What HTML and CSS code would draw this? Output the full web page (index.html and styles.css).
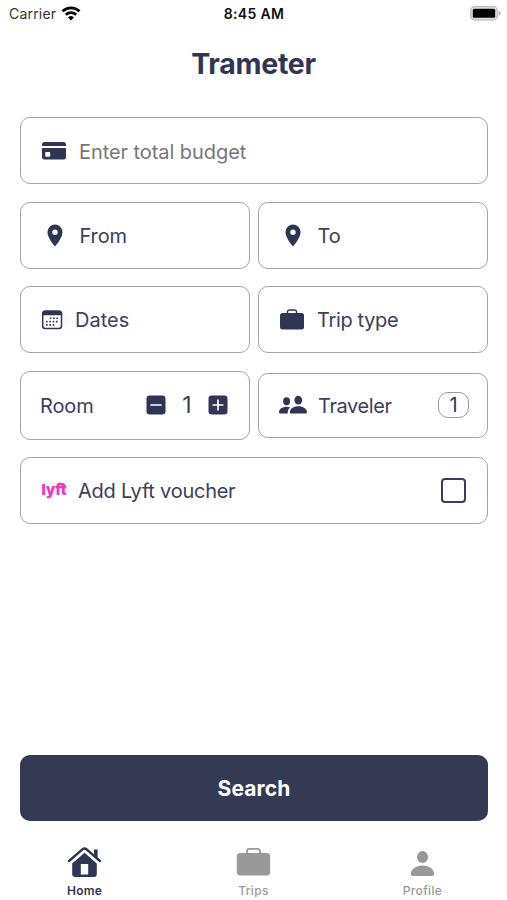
FILE: index.html
```html
<!DOCTYPE html>
<html lang="en">
<head>
<meta charset="utf-8">
<title>Trameter</title>
<link rel="stylesheet" href="styles.css">
</head>
<body>
<div class="app">
  <header class="status">
    <div class="carrier"><span>Carrier</span>
      <svg width="20" height="15" viewBox="0 0 20 15" fill="none" stroke="#000" stroke-width="2.7"><path d="M1.500 5.300a12.200 12.200 0 0 1 17 0M4.800 8.800a7.500 7.500 0 0 1 10.400 0"/><path d="M10 14.500 7 11.400a4.300 4.300 0 0 1 6 0z" fill="#000" stroke="none"/></svg>
    </div>
    <time class="clock">8:45 AM</time>
    <svg class="battery" width="31" height="15" viewBox="0 0 31 15"><rect x=".7" y=".7" width="26.600" height="13.200" rx="4" fill="#e4e4e4" stroke="#b8b8b8" stroke-width="1.200"/><rect x="2.800" y="2.800" width="22.400" height="9" rx="1.500"/><path d="M28.600 4.800Q30.700 5.700 30.700 7.300T28.600 9.800z" fill="#b0b0b0"/></svg>
  </header>
  <h1 class="title">Trameter</h1>
  <main class="form">
    <div class="field">
      <svg class="icon" width="26" height="20" viewBox="0 0 26 20"><path d="M1 5V3.500Q1 1 3.500 1h19Q25 1 25 3.500V5z"/><path fill-rule="evenodd" d="M1 7h24v9q0 2.500-2.500 2.500h-19Q1 18.500 1 16zm4.200 4q-1 0-1 1v2.700q0 1 1 1h3q1 0 1-1V12q0-1-1-1z"/></svg>
      <span class="label budget">Enter total budget</span>
    </div>
    <div class="row">
      <div class="field">
        <svg class="icon pin" width="16" height="23" viewBox="0 0 16 23"><path fill-rule="evenodd" d="M8 .5A7.500 7.500 0 0 0 .5 8C.5 13 5 19 8 22.500c3-3.500 7.500-9.500 7.500-14.500A7.500 7.500 0 0 0 8 .5zm0 5a2.700 2.700 0 1 1 0 5.400 2.700 2.700 0 0 1 0-5.400z"/></svg>
        <span class="label from">From</span>
      </div>
      <div class="field">
        <svg class="icon pin" width="16" height="23" viewBox="0 0 16 23"><path fill-rule="evenodd" d="M8 .5A7.500 7.500 0 0 0 .5 8C.5 13 5 19 8 22.500c3-3.500 7.500-9.500 7.500-14.500A7.500 7.500 0 0 0 8 .5zm0 5a2.700 2.700 0 1 1 0 5.400 2.700 2.700 0 0 1 0-5.400z"/></svg>
        <span class="label from">To</span>
      </div>
    </div>
    <div class="row">
      <div class="field">
        <svg class="icon calendar" width="22" height="20" viewBox="0 0 22 20"><rect x="1.700" y="1.200" width="18.800" height="17.200" rx="2.500" fill="none" stroke="#2f3553" stroke-width="1.500"/><path d="M1 5.300V4q0-3.500 3.500-3.500h13Q21.200.5 21.200 4v1.300z"/><path d="M8.800 8.300h9M5 11.600h12.800M5 14.900h9.500" fill="none" stroke="#2f3553" stroke-width="1.600" stroke-dasharray="1.600 1.700"/></svg>
        <span class="label">Dates</span>
      </div>
      <div class="field">
        <svg class="icon" width="26" height="21" viewBox="0 0 26 21"><rect x="1" y="4" width="24" height="16.500" rx="2.500"/><path d="M8.500 4.500V3Q8.500 1 10.500 1h5q2 0 2 2v1.500" fill="none" stroke="#2f3553" stroke-width="1.400"/></svg>
        <span class="label trip">Trip type</span>
      </div>
    </div>
    <div class="row">
      <div class="field room">
        <span class="label">Room</span>
        <div class="stepper">
          <svg width="20" height="20" viewBox="0 0 20 20"><rect x=".5" y=".5" width="19" height="19" rx="3.300" fill="#2f3553"/><path d="M5 10h10" stroke="#fff" stroke-width="1.700" stroke-linecap="round"/></svg>
          <span class="count">1</span>
          <svg width="20" height="20" viewBox="0 0 20 20"><rect x=".5" y=".5" width="19" height="19" rx="3.300" fill="#2f3553"/><path d="M5.200 10h9.600M10 5.200v9.600" stroke="#fff" stroke-width="1.700" stroke-linecap="round"/></svg>
        </div>
      </div>
      <div class="field traveler">
        <svg class="icon" width="29" height="20" viewBox="0 0 29 20"><ellipse cx="7.600" cy="6.300" rx="3.500" ry="4"/><ellipse cx="19.300" cy="5.100" rx="3.900" ry="4.400"/><path d="M0 17.500C0 14 3.500 11.800 7.600 11.800q2 0 3.700.7c-1.800 1.300-2.700 3-2.600 6H1.200Q0 18.500 0 17.500zM10.800 17.200c0-3.400 3.900-6 8.500-6s8.700 2.600 8.700 6q0 1.300-1.200 1.300H12q-1.200 0-1.200-1.300z"/></svg>
        <span class="label">Traveler</span>
        <span class="badge">1</span>
      </div>
    </div>
    <div class="field">
      <svg class="icon" width="28" height="30" viewBox="0 0 28 30"><text x=".5" y="19" class="logo-text" textLength="25" lengthAdjust="spacingAndGlyphs">lyft</text><path d="M16.500 11q.5-3.200 3.700-3.200T24 11" fill="none" stroke="#ea3bbd" stroke-width="2.200"/></svg>
      <span class="label voucher">Add Lyft voucher</span>
      <span class="checkbox"></span>
    </div>
  </main>
  <button class="search">Search</button>
  <nav class="tabs">
    <a class="tab active">
      <svg width="35" height="32" viewBox="0 0 35 32"><path d="M2 15 15.700 3.200q1.800-1.500 3.600 0L33 15" fill="none" stroke="#2f3553" stroke-width="2.400" stroke-linecap="round"/><path d="M27 3.600h3.600V13L27 9.800z"/><path fill-rule="evenodd" d="m17.500 6.800 12.300 10.600V28q0 3-3 3H8.200q-3 0-3-3V17.400zM13.800 18v10.500h7.400V18z"/></svg>
      <span>Home</span>
    </a>
    <a class="tab">
      <svg width="35" height="32" viewBox="0 0 35 32"><rect x=".8" y="7" width="33.400" height="22.500" rx="3.500"/><path d="M11 7.500V5.500Q11 2.800 13.700 2.800h7.600Q24 2.800 24 5.500v2" fill="none" stroke="#999" stroke-width="1.700"/></svg>
      <span>Trips</span>
    </a>
    <a class="tab">
      <svg width="35" height="32" viewBox="0 0 35 32"><ellipse cx="17.500" cy="11" rx="5.500" ry="6.100"/><path d="M5.800 27.800c0-4.300 5.200-8.300 11.700-8.300s11.700 4 11.700 8.300q0 2.200-2.200 2.200H8q-2.200 0-2.200-2.200z"/></svg>
      <span>Profile</span>
    </a>
  </nav>
</div>
</body>
</html>
```

FILE: styles.css
```css
* { box-sizing: border-box; }
body { margin: 0; background: #fff; font-family: Inter, "Liberation Sans", sans-serif; color: #2f3553; }
svg { display: block; flex: none; overflow: visible; }
.app { width: 507px; height: 900px; display: flex; flex-direction: column; overflow: hidden; }
.status { height: 27px; display: grid; grid-template-columns: 1fr auto 1fr; align-items: center; padding: 0 6px 0 9px; color: #111; }
.carrier { display: flex; align-items: center; gap: 5px; font-size: 14px; letter-spacing: .2px; color: #333; }
.clock { font-size: 14px; font-weight: 600; letter-spacing: .35px; margin-right: 2px; }
.battery { justify-self: end; }
.title { margin: 18px 0 0; height: 38px; line-height: 38px; font-size: 28.5px; font-weight: 650; letter-spacing: -.3px; text-align: center; }
.form { margin: 34px 19px 0 20px; display: flex; flex-direction: column; gap: 17.5px; }
.row { display: grid; grid-template-columns: 230px 230px; gap: 8px; align-items: center; }
.field { height: 67px; border: 1.5px solid #a4a4a8; border-radius: 10px; display: flex; align-items: center; padding: 0 19px 0 20px; font-size: 20px; }
.icon { fill: #2f3553; }
.label { margin-left: 12px; color: #3c4059; white-space: nowrap; padding-top: 1px; }
.budget { color: #777; letter-spacing: -.07px; padding-top: 2px; }
.pin { margin: 0 5px 0 6px; }
.from { margin-left: 11.5px; letter-spacing: -.1px; }
.trip { letter-spacing: -.35px; }
.row .traveler { height: 65px; }
.traveler .label { margin-left: 10px; letter-spacing: -.4px; }
.room { height: 69px; justify-content: space-between; padding-right: 21px; }
.room .label { margin-left: -1px; letter-spacing: -.1px; }
.stepper { display: flex; align-items: center; }
.count { width: 42px; text-align: center; font-size: 23px; color: #3c4059; }
.badge { margin-left: auto; width: 31px; height: 26px; border: 1px solid #999; border-radius: 10px; display: flex; align-items: center; justify-content: center; margin-right: -1px; }
.logo-text { font: 900 15px Inter, sans-serif; fill: #ea3bbd; }
.voucher { margin-left: 9px; letter-spacing: -.25px; }
.checkbox { margin-left: auto; width: 25px; height: 25px; border: 2px solid #3a3e5a; border-radius: 4px; margin-right: 2px; }
.search { margin: 231px 19px 0 20px; height: 66px; border: 0; border-radius: 10px; background: #343a53; color: #fff; font: 650 21px Inter, sans-serif; letter-spacing: .15px; flex: none; }
.tabs { margin-top: 25px; display: grid; grid-template-columns: repeat(3, 1fr); }
.tab { display: flex; flex-direction: column; align-items: center; gap: 5px; font-size: 12px; line-height: 16px; font-weight: 500; letter-spacing: .35px; color: #999; fill: #999; }
.active { color: #2f3553; fill: #2f3553; font-weight: 600; letter-spacing: .2px; }
```
